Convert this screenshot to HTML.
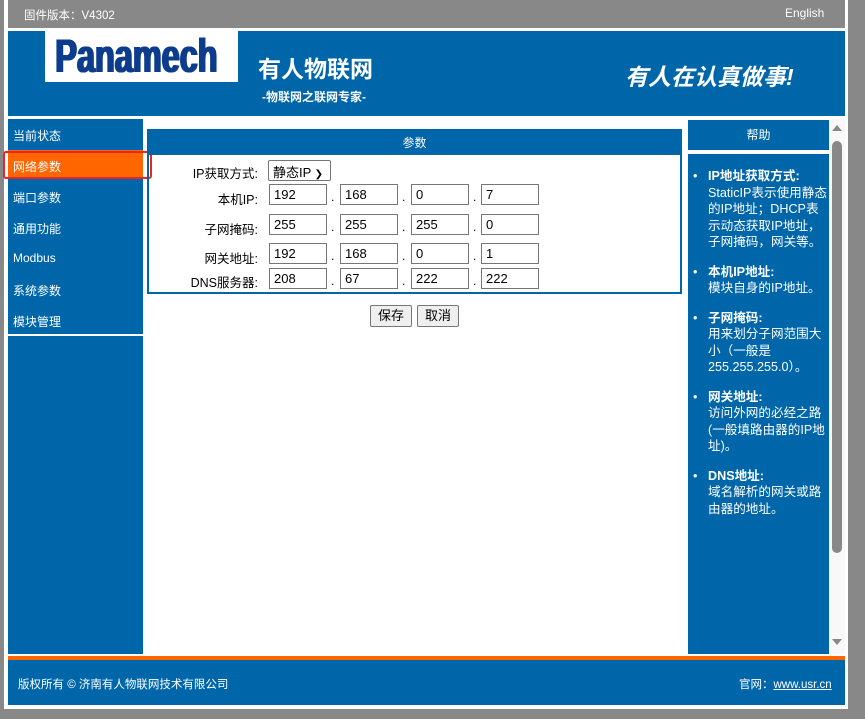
<!DOCTYPE html>
<html><head><meta charset="utf-8"><style>
*{margin:0;padding:0;box-sizing:border-box}
body{width:865px;height:719px;background:#888;font-family:"Liberation Sans","Noto Sans CJK SC",sans-serif;font-size:12px;position:relative;overflow:hidden;color:#000}
.abs{position:absolute}
.frame{left:4px;top:0;width:844px;height:709px;background:#fff}
.top{left:8px;top:0;width:837px;height:28px;background:#888;color:#fff;font-size:12px}
.hdr{left:8px;top:31px;width:837px;height:85px;background:#0066aa}
.blue{background:#0066aa}
.nav{left:8px;width:135px;height:29px;background:#0066aa;color:#fff;padding:8px 0 0 5px;font-size:12px}
.lbl{position:absolute;text-align:right;width:120px;left:138px;font-size:12.5px}
.inp{position:absolute;height:21px;width:58px;border:1px solid #767676;background:#fff;font-size:13px;padding:1px 0 0 4px;line-height:17px}
.dot{position:absolute;font-size:12px}
.btn{position:absolute;top:305px;height:22px;border:1px solid #767676;border-radius:2px;background:#efefef;font-size:13px;text-align:center;line-height:19px}
ul{list-style:none}
li{position:relative;padding-left:20px;margin-bottom:13px;line-height:16.5px;font-size:12.6px}
li:before{content:"•";position:absolute;left:5px;top:0}
</style></head><body>
<div class="abs frame"></div>
<div class="abs top"><span class="abs" style="left:16px;top:7px;font-size:11.5px">固件版本：V4302</span><span class="abs" style="left:777px;top:6px">English</span></div>
<div class="abs hdr">
 <div class="abs" style="left:37px;top:0;width:193px;height:51px;background:#fff;overflow:hidden">
  <span class="abs" style="left:10px;top:1px;color:#0d3c8c;font-weight:bold;font-size:47px;line-height:48px;white-space:nowrap;transform:scaleX(0.69);transform-origin:0 0;text-shadow:1px 0 0 #0d3c8c,-1px 0 0 #0d3c8c,2px 0 0 #0d3c8c">Panamech</span>
 </div>
 <div class="abs" style="left:250px;top:19px;color:#fff;font-weight:bold;font-size:23px">有人物联网</div>
 <div class="abs" style="left:254px;top:57px;color:#fff;font-weight:bold;font-size:12px">-物联网之联网专家-</div>
 <div class="abs" style="left:617px;top:27px;color:#fff;font-weight:bold;font-style:italic;font-size:23px">有人在认真做事!</div>
</div>
<div class="abs blue" style="left:8px;top:119px;width:135px;height:535px"></div>
<div class="abs nav" style="top:119px">当前状态</div>
<div class="abs nav" style="top:150px;background:#ff6600">网络参数</div>
<div class="abs" style="left:3px;top:151px;width:149px;height:28px;border:2px solid #e8262a;border-radius:3px"></div>
<div class="abs nav" style="top:181px">端口参数</div>
<div class="abs nav" style="top:212px">通用功能</div>
<div class="abs nav" style="top:243px">Modbus</div>
<div class="abs nav" style="top:274px">系统参数</div>
<div class="abs nav" style="top:305px">模块管理</div>
<div class="abs" style="left:8px;top:334px;width:135px;height:2px;background:#fff"></div>

<div class="abs" style="left:147px;top:129px;width:535px;height:165px;border:2px solid #0066aa;border-top:none"></div>
<div class="abs blue" style="left:147px;top:129px;width:535px;height:26px;color:#fff;text-align:center;line-height:28px;font-size:12px">参数</div>
<div class="lbl" style="top:163px">IP获取方式:</div>
<div class="abs" style="left:268px;top:160px;width:63px;height:21px;border:1px solid #767676;border-radius:2px;font-size:13px;padding:1px 0 0 4px">静态IP <span style="font-size:10px">&#10095;</span></div>
<div class="lbl" style="top:189px">本机IP:</div>
<div class="lbl" style="top:219px">子网掩码:</div>
<div class="lbl" style="top:248px">网关地址:</div>
<div class="lbl" style="top:272px">DNS服务器:</div>
<div class="inp" style="left:269px;top:184px">192</div><div class="inp" style="left:340px;top:184px">168</div><div class="inp" style="left:411px;top:184px">0</div><div class="inp" style="left:481px;top:184px">7</div>
<div class="inp" style="left:269px;top:214px">255</div><div class="inp" style="left:340px;top:214px">255</div><div class="inp" style="left:411px;top:214px">255</div><div class="inp" style="left:481px;top:214px">0</div>
<div class="inp" style="left:269px;top:243px">192</div><div class="inp" style="left:340px;top:243px">168</div><div class="inp" style="left:411px;top:243px">0</div><div class="inp" style="left:481px;top:243px">1</div>
<div class="inp" style="left:269px;top:268px">208</div><div class="inp" style="left:340px;top:268px">67</div><div class="inp" style="left:411px;top:268px">222</div><div class="inp" style="left:481px;top:268px">222</div>
<div class="dot" style="left:331px;top:190px">.</div><div class="dot" style="left:402px;top:190px">.</div><div class="dot" style="left:473px;top:190px">.</div>
<div class="dot" style="left:331px;top:220px">.</div><div class="dot" style="left:402px;top:220px">.</div><div class="dot" style="left:473px;top:220px">.</div>
<div class="dot" style="left:331px;top:249px">.</div><div class="dot" style="left:402px;top:249px">.</div><div class="dot" style="left:473px;top:249px">.</div>
<div class="dot" style="left:331px;top:274px">.</div><div class="dot" style="left:402px;top:274px">.</div><div class="dot" style="left:473px;top:274px">.</div>
<div class="btn" style="left:370px;width:42px">保存</div>
<div class="btn" style="left:417px;width:42px">取消</div>

<div class="abs blue" style="left:688px;top:120px;width:141px;height:30px;color:#fff;text-align:center;line-height:30px">帮助</div>
<div class="abs blue" style="left:688px;top:154px;width:141px;height:500px;color:#fff;padding-top:14px;overflow:hidden">
<ul style="width:142px">
<li><b>IP地址获取方式:</b><br>StaticIP表示使用静态的IP地址；DHCP表示动态获取IP地址，子网掩码，网关等。</li>
<li><b>本机IP地址:</b><br>模块自身的IP地址。</li>
<li><b>子网掩码:</b><br>用来划分子网范围大小（一般是255.255.255.0）。</li>
<li><b>网关地址:</b><br>访问外网的必经之路(一般填路由器的IP地址)。</li>
<li><b>DNS地址:</b><br>域名解析的网关或路由器的地址。</li>
</ul></div>
<div class="abs" style="left:829px;top:119px;width:16px;height:535px;background:#f8f8f8"></div>
<div class="abs" style="left:832px;top:141px;width:10px;height:412px;background:#888;border-radius:5px"></div>
<div class="abs" style="left:832px;top:125px;width:0;height:0;border-left:5px solid transparent;border-right:5px solid transparent;border-bottom:6px solid #888"></div>
<div class="abs" style="left:832px;top:639px;width:0;height:0;border-left:5px solid transparent;border-right:5px solid transparent;border-top:6px solid #888"></div>

<div class="abs" style="left:8px;top:656px;width:837px;height:4px;background:#ff6600"></div>
<div class="abs blue" style="left:8px;top:660px;width:837px;height:45px;color:#fff;font-size:11.5px">
<span class="abs" style="left:10px;top:16px">版权所有 © 济南有人物联网技术有限公司</span>
<span class="abs" style="left:731px;top:16px">官网：<u>www.usr.cn</u></span>
</div>
</body></html>
